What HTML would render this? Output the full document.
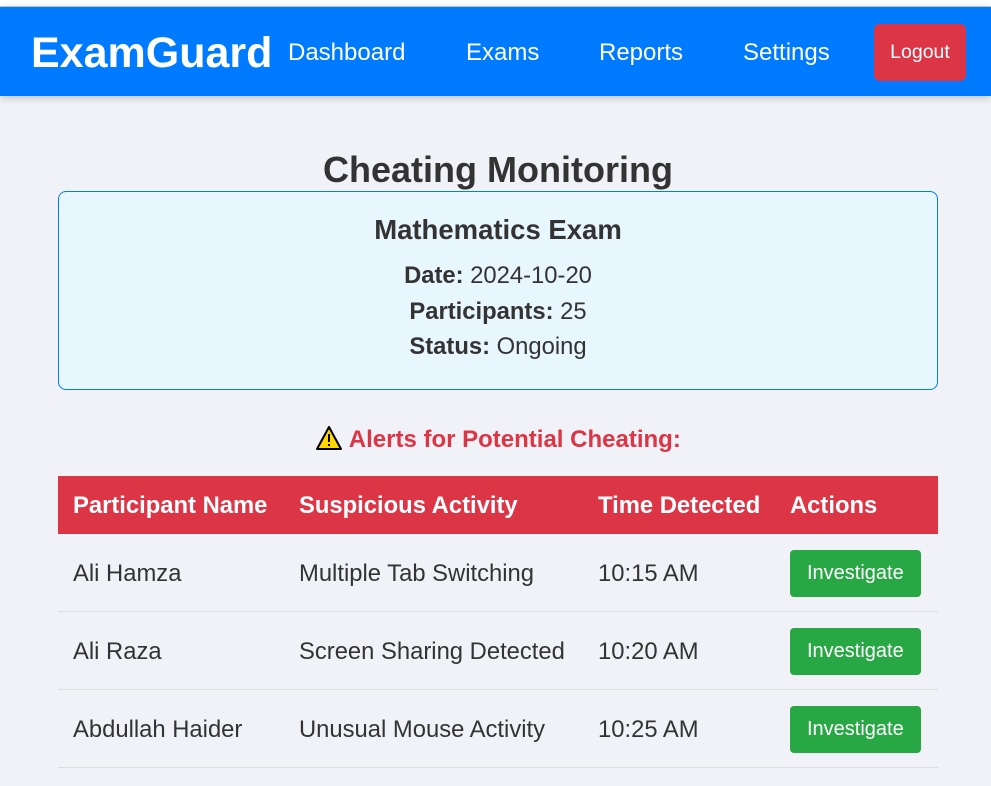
<!DOCTYPE html>
<html><head><style>
body{margin:0;background:#f0f2f7;font-family:"Liberation Sans",sans-serif;color:#333;width:991px;height:786px;overflow:hidden;position:relative}
.top{position:absolute;left:0;top:0;width:991px;height:6px;background:#fff;border-bottom:1px solid #ccc}
nav{position:absolute;left:0;top:7px;width:991px;height:89px;background:#007bff;box-shadow:0 2px 8px rgba(0,0,0,.2)}
nav .logo{position:absolute;left:31px;top:22px;font-size:43px;font-weight:bold;color:#fff}
nav a{position:absolute;top:32px;font-size:24px;color:#fff}
.lo{position:absolute;left:874px;top:17px;width:92px;height:57px;background:#dc3545;border-radius:6px;color:#fff;font-size:19.5px;text-align:center;line-height:57px}
h1{position:absolute;left:0;width:996px;top:149px;margin:0;text-align:center;font-size:36px;color:#333}
.card{position:absolute;left:58px;top:191px;width:878px;height:197px;border:1px solid #007bff;border-radius:8px;background:#e8f6fe;text-align:center}
.card h2{margin:22px 0 12px;font-size:27.5px}
.card p{margin:0;font-size:23.8px;line-height:35.5px}
.al{position:absolute;left:315px;top:425px;font-size:24px;font-weight:bold;color:#dc3545}
table{position:absolute;left:58px;top:476px;width:880px;border-collapse:collapse;font-size:23.8px}
th{background:#dc3545;color:#fff;text-align:left;height:56px;padding:2px 0 0 15px}
td{height:75px;padding:2px 0 0 15px;border-bottom:1px solid #ddd}
.b{display:inline-block;background:#28a745;color:#fff;font-size:20px;padding:0 17px;height:47px;line-height:47px;border-radius:4px}
</style></head><body>
<div class="top"></div>
<nav><div class="logo">ExamGuard</div>
<a style="left:288px">Dashboard</a><a style="left:466px">Exams</a><a style="left:599px">Reports</a><a style="left:743px">Settings</a>
<div class="lo">Logout</div></nav>
<h1>Cheating Monitoring</h1>
<div class="card"><h2>Mathematics Exam</h2>
<p><b>Date:</b> 2024-10-20</p><p><b>Participants:</b> 25</p><p><b>Status:</b> Ongoing</p></div>
<div class="al"><svg width="28" height="26" viewBox="0 0 28 26" style="vertical-align:-4px"><path d="M14 2L26 24H2Z" fill="#ffd800" stroke="#000" stroke-width="2" stroke-linejoin="round"/><rect x="13" y="9" width="2" height="8" fill="#000"/><rect x="13" y="19" width="2" height="2" fill="#000"/></svg> Alerts for Potential Cheating:</div>
<table>
<tr><th style="width:211px">Participant Name</th><th style="width:284px">Suspicious Activity</th><th style="width:177px">Time Detected</th><th>Actions</th></tr>
<tr><td>Ali Hamza</td><td>Multiple Tab Switching</td><td>10:15 AM</td><td><span class="b">Investigate</span></td></tr>
<tr><td>Ali Raza</td><td>Screen Sharing Detected</td><td>10:20 AM</td><td><span class="b">Investigate</span></td></tr>
<tr><td>Abdullah Haider</td><td>Unusual Mouse Activity</td><td>10:25 AM</td><td><span class="b">Investigate</span></td></tr>
</table>
</body></html>
